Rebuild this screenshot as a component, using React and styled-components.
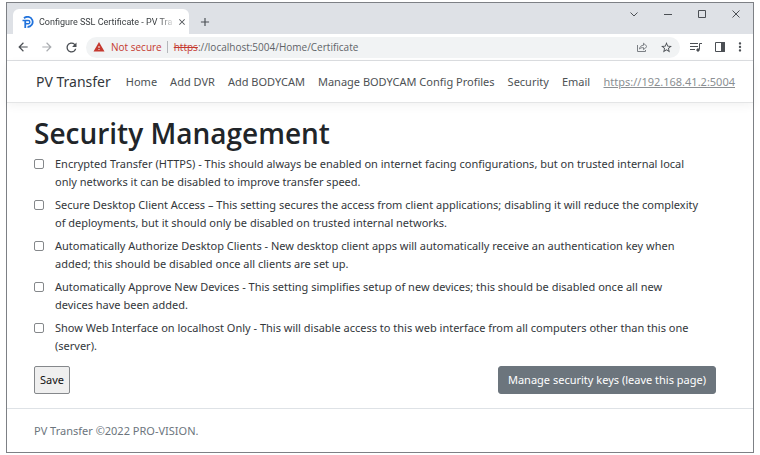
import React, { useState } from "react";
import styled, { createGlobalStyle } from "styled-components";
import {
  MdAdd,
  MdArrowBack,
  MdArrowForward,
  MdClose,
  MdMoreVert,
  MdRefresh,
  MdStarBorder,
  MdWarning,
} from "react-icons/md";

const GlobalStyle = createGlobalStyle`
  * {
    box-sizing: border-box;
  }

  body {
    margin: 0;
    background-color: #fff;
    color: #33373b;
    font-family: "Noto Sans", "Open Sans", sans-serif;
    font-size: 11px;
    line-height: 18px;
  }

  button,
  input {
    font: inherit;
    color: inherit;
    margin: 0;
  }

  svg {
    flex: none;
  }
`;

const BrowserWindow = styled.div`
  margin: 2px 6px;
  border: 1px solid #7d8085;
  background-color: #fff;
`;

const TabStrip = styled.div`
  display: flex;
  align-items: flex-start;
  height: 31px;
  padding-left: 6px;
  background-color: #dee1e6;
`;

const Tab = styled.div`
  display: flex;
  align-items: center;
  align-self: flex-end;
  gap: 5px;
  width: 176px;
  height: 25px;
  padding: 0 7px 0 9px;
  border-radius: 6px 6px 0 0;
  background-color: #fff;
  font-family: Roboto, sans-serif;
  font-size: 9px;
  color: #3c4043;
`;

const TabTitle = styled.span`
  flex: 1;
  white-space: nowrap;
  mask-image: linear-gradient(to right, #000 90%, rgba(0, 0, 0, 0.2));
`;

const IconButton = styled.button`
  display: flex;
  align-items: center;
  justify-content: center;
  flex: none;
  width: ${(props) => props.$width || 24}px;
  height: ${(props) => props.$height || 24}px;
  padding: 0;
  border: none;
  background: none;
  color: ${(props) => props.$color || "#4b4f54"};
`;

const NewTab = styled(IconButton)`
  align-self: flex-end;
  margin-left: 4px;
`;

const WindowButtons = styled.div`
  display: flex;
  margin-left: auto;
`;

const Toolbar = styled.div`
  display: flex;
  align-items: center;
  height: 27px;
  padding: 0 5px 0 4px;
  border-bottom: 1px solid #dcdee1;
`;

const AddressBar = styled.div`
  display: flex;
  align-items: center;
  flex: 1;
  height: 21px;
  margin: 0 4px 0 3px;
  padding: 0 2px 0 7px;
  border-radius: 11px;
  background-color: #f1f3f4;
  font-family: "Open Sans", sans-serif;
  font-size: 10px;
  color: #5f6368;
`;

const NotSecure = styled.span`
  display: flex;
  align-items: center;
  gap: 6px;
  margin-right: 6px;
  padding-right: 5px;
  border-right: 1px solid #b4b7bb;
  line-height: 12px;
  color: #c5392f;
`;

const Scheme = styled.s`
  color: #c5392f;
`;

const Url = styled.span`
  flex: 1;
`;

const Navbar = styled.nav`
  display: flex;
  align-items: center;
  gap: 13px;
  height: 42px;
  padding: 0 18px 0 29px;
  border-bottom: 1px solid #e4e5e6;
  box-shadow: 0 3px 9px rgba(0, 0, 0, 0.05);
  white-space: nowrap;
`;

const Brand = styled.a`
  margin-right: 2px;
  font-size: 14px;
  color: #33373b;
  text-decoration: none;
`;

const NavLink = styled.a`
  color: #4d5154;
  text-decoration: none;
`;

const ServerLink = styled.a`
  margin-left: auto;
  color: #8b8f93;
`;

const Main = styled.main`
  padding: 13px 37px 14px 27px;
`;

const Title = styled.h1`
  margin: 0 0 5px;
  font-family: "Open Sans", sans-serif;
  font-size: 28px;
  font-weight: 600;
  line-height: 34px;
  color: #212529;
`;

const Setting = styled.label`
  display: flex;
  align-items: flex-start;
  gap: 11px;
  margin-bottom: 5px;
  padding-right: 15px;
`;

const Checkbox = styled.input`
  flex: none;
  appearance: none;
  width: 10px;
  height: 10px;
  margin-top: 4px;
  border: 1px solid #85888b;
  border-radius: 2px;
  background-color: #fff;

  &:checked {
    background-color: #0d6efd;
  }
`;

const Actions = styled.div`
  display: flex;
  justify-content: space-between;
  padding-top: 6px;
`;

const SaveButton = styled.button`
  height: 28px;
  padding: 0 5px;
  border: 1px solid #85888b;
  border-radius: 2px;
  background-color: #efefef;
  color: #111;
`;

const ManageButton = styled.button`
  height: 28px;
  padding: 0 9px;
  border: 1px solid #6c757d;
  border-radius: 3px;
  background-color: #6c757d;
  color: #fff;
`;

const Footer = styled.footer`
  padding: 13px 27px 12px;
  border-top: 1px solid #dee2e6;
  color: #6c757d;
`;

const settings = [
  "Encrypted Transfer (HTTPS) - This should always be enabled on internet facing configurations, but on trusted internal local only networks it can be disabled to improve transfer speed.",
  "Secure Desktop Client Access – This setting secures the access from client applications; disabling it will reduce the complexity of deployments, but it should only be disabled on trusted internal networks.",
  "Automatically Authorize Desktop Clients - New desktop client apps will automatically receive an authentication key when added; this should be disabled once all clients are set up.",
  "Automatically Approve New Devices - This setting simplifies setup of new devices; this should be disabled once all new devices have been added.",
  "Show Web Interface on localhost Only - This will disable access to this web interface from all computers other than this one (server).",
];

const links = [
  "Home",
  "Add DVR",
  "Add BODYCAM",
  "Manage BODYCAM Config Profiles",
  "Security",
  "Email",
];

const Favicon = () => (
  <svg width="12" height="12" viewBox="0 0 24 24" fill="none" stroke="#2273dc">
    <path d="M4 4.500A10.200 10.200 0 1 1 11 22" strokeWidth="3.600" />
    <path d="M1 9h11.500a3.200 3.200 0 0 1 0 6.400H7" strokeWidth="2.800" />
    <path d="M6.500 9v15" strokeWidth="3.600" />
  </svg>
);

const Chrome = () => (
  <>
    <TabStrip>
      <Tab>
        <Favicon />
        <TabTitle>Configure SSL Certificate - PV Tra</TabTitle>
        <IconButton $width={10} aria-label="Close tab">
          <MdClose size={10} />
        </IconButton>
      </Tab>
      <NewTab aria-label="New tab">
        <MdAdd size={14} />
      </NewTab>
      <WindowButtons>
        <IconButton $width={34} $height={21} aria-label="Search tabs">
          <svg width="10" height="10" viewBox="0 0 10 10" fill="none" stroke="currentColor">
            <path d="M1.500 3.500 5 7l3.500-3.500" />
          </svg>
        </IconButton>
        <IconButton $width={34} $height={21} aria-label="Minimize">
          <svg width="10" height="10" viewBox="0 0 10 10" fill="none" stroke="currentColor">
            <path d="M1 5.500h8" />
          </svg>
        </IconButton>
        <IconButton $width={34} $height={21} aria-label="Maximize">
          <svg width="10" height="10" viewBox="0 0 10 10" fill="none" stroke="currentColor">
            <path d="M1.500 1.500h7v7h-7z" />
          </svg>
        </IconButton>
        <IconButton $width={34} $height={21} aria-label="Close">
          <svg width="10" height="10" viewBox="0 0 10 10" fill="none" stroke="currentColor">
            <path d="m1.500 1.500 7 7M8.500 1.500l-7 7" />
          </svg>
        </IconButton>
      </WindowButtons>
    </TabStrip>
    <Toolbar>
      <IconButton aria-label="Back">
        <MdArrowBack size={14} />
      </IconButton>
      <IconButton $color="#a9acb0" aria-label="Forward">
        <MdArrowForward size={14} />
      </IconButton>
      <IconButton aria-label="Reload">
        <MdRefresh size={15} />
      </IconButton>
      <AddressBar>
        <NotSecure>
          <MdWarning size={12} />
          Not secure
        </NotSecure>
        <Url>
          <Scheme>https</Scheme>://localhost:5004/Home/Certificate
        </Url>
        <IconButton $color="#7b7f84" aria-label="Share">
          <svg width="12" height="12" viewBox="0 0 12 12" fill="none" stroke="currentColor">
            <path d="M1.500 4v6.500h8V9" />
            <path d="M3.500 8c.3-2.500 2-3.700 4-3.700V2.200l3.500 3.300L7.500 8.700V6.600c-2 0-3 .3-4 1.400z" />
          </svg>
        </IconButton>
        <IconButton aria-label="Bookmark">
          <MdStarBorder size={13} />
        </IconButton>
      </AddressBar>
      <IconButton aria-label="Media controls">
        <svg width="12" height="12" viewBox="0 0 12 12" fill="none" stroke="currentColor">
          <path d="M0 2.500h8M0 5.500h8M0 8.500h5M12 2.500H9.500v6" />
          <circle cx="8" cy="9" r="1.200" fill="currentColor" />
        </svg>
      </IconButton>
      <IconButton aria-label="Side panel">
        <svg width="12" height="12" viewBox="0 0 12 12" fill="none" stroke="currentColor">
          <path d="M1.500 1.500h9v9h-9z" />
          <path d="M7.500 1.500h3v9h-3z" fill="currentColor" />
        </svg>
      </IconButton>
      <IconButton $width={16} aria-label="Menu">
        <MdMoreVert size={14} />
      </IconButton>
    </Toolbar>
  </>
);

const App = () => {
  const [checked, setChecked] = useState({});

  const toggle = (index) => {
    setChecked({ ...checked, [index]: !checked[index] });
  };

  return (
    <BrowserWindow>
      <GlobalStyle />
      <Chrome />
      <Navbar>
        <Brand href="#">PV Transfer</Brand>
        {links.map((link) => (
          <NavLink href="#" key={link}>
            {link}
          </NavLink>
        ))}
        <ServerLink href="#">https://192.168.41.2:5004</ServerLink>
      </Navbar>
      <Main>
        <Title>Security Management</Title>
        {settings.map((text, index) => (
          <Setting key={text}>
            <Checkbox
              type="checkbox"
              checked={!!checked[index]}
              onChange={() => toggle(index)}
            />
            <span>{text}</span>
          </Setting>
        ))}
        <Actions>
          <SaveButton type="submit">Save</SaveButton>
          <ManageButton type="button">
            Manage security keys (leave this page)
          </ManageButton>
        </Actions>
      </Main>
      <Footer>PV Transfer ©2022 PRO-VISION.</Footer>
    </BrowserWindow>
  );
};

export default App;
